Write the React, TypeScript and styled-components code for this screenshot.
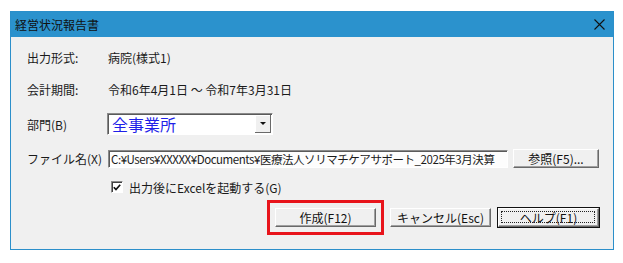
import styled, { createGlobalStyle } from 'styled-components';

const GlobalStyle = createGlobalStyle`
  html, body {
    margin: 0;
    padding: 0;
    background: #ffffff;
  }
  body {
    font-family: 'Noto Sans CJK JP', 'Liberation Sans', sans-serif;
    font-size: 12px;
    color: #1a1a1a;
  }
`;

const Page = styled.div`
  width: 623px;
  height: 263px;
  padding: 11px 0 0 10px;
  box-sizing: border-box;
`;

const Window = styled.div`
  width: 604px;
  height: 239px;
  border: 1px solid #2b8fca;
  box-sizing: border-box;
  background: #f0f0f0;
  display: flex;
  flex-direction: column;
`;

const TitleBar = styled.div`
  height: 25px;
  background: #2b92cd;
  display: flex;
  align-items: center;
  justify-content: space-between;
  padding: 0 8px 0 4px;
  flex-shrink: 0;
`;

const Title = styled.span`
  font-size: 12px;
  color: #111;
`;

const CloseIcon = styled.svg`
  width: 11px;
  height: 11px;
`;

const Body = styled.div`
  display: flex;
  flex-direction: column;
  padding: 10px 12px 0 16px;
`;

const Row = styled.div<{ $top: number; $h: number }>`
  display: flex;
  align-items: center;
  height: ${p => p.$h}px;
  margin-top: ${p => p.$top}px;
`;

const Label = styled.div`
  width: 81px;
  flex-shrink: 0;
  white-space: nowrap;
`;

const Value = styled.div`
  white-space: nowrap;
`;

const Combo = styled.div`
  width: 166px;
  height: 22px;
  box-sizing: border-box;
  border-top: 1px solid #8a8a8a;
  border-left: 1px solid #8a8a8a;
  border-right: 1px solid #ffffff;
  border-bottom: 1px solid #ffffff;
  box-shadow: inset 1px 1px 0 #5a5a5a;
  background: #ffffff;
  display: flex;
  align-items: stretch;
  margin-left: -1px;
`;

const ComboText = styled.div`
  flex: 1;
  font-size: 16px;
  line-height: 20px;
  color: #1f1fe8;
  padding-left: 4px;
`;

const DropButton = styled.div`
  width: 15px;
  margin: 1px;
  background: #f0f0f0;
  border-right: 1px solid #6a6a6a;
  border-bottom: 1px solid #6a6a6a;
  box-shadow: inset 1px 1px 0 #ffffff;
  display: flex;
  align-items: center;
  justify-content: center;
`;

const Arrow = styled.div`
  width: 0;
  height: 0;
  border-left: 3px solid transparent;
  border-right: 3px solid transparent;
  border-top: 3px solid #111;
`;

const TextField = styled.div`
  width: 400px;
  height: 18px;
  box-sizing: border-box;
  border-top: 1px solid #8a8a8a;
  border-left: 1px solid #8a8a8a;
  border-right: 1px solid #ffffff;
  border-bottom: 1px solid #ffffff;
  box-shadow: inset 1px 1px 0 #5a5a5a;
  background: #fdfdfd;
  overflow: hidden;
  white-space: nowrap;
  font-size: 11.5px;
  line-height: 16px;
  padding-left: 2px;
  letter-spacing: -0.45px;
`;

const Button = styled.button<{ $w: number; $default?: boolean }>`
  width: ${p => p.$w}px;
  height: 19px;
  padding: 0;
  box-sizing: border-box;
  font-family: 'Noto Sans CJK JP', 'Liberation Sans', sans-serif;
  font-size: 12px;
  line-height: 14px;
  color: #111;
  background: #f0f0f0;
  border: none;
  border-top: 1px solid #ffffff;
  border-left: 1px solid #ffffff;
  border-right: 1px solid #696969;
  border-bottom: 1px solid #696969;
  box-shadow: inset -1px -1px 0 #a0a0a0;
  outline: ${p => (p.$default ? '1px solid #111' : 'none')};
  position: relative;
  display: flex;
  align-items: center;
  justify-content: center;
`;

const BrowseButton = styled(Button)`
  margin-left: 5px;
`;

const FocusRect = styled.span`
  position: absolute;
  inset: 2px 3px 3px 2px;
  border: 1px dotted #222;
`;

const Highlight = styled.div`
  outline: 3px solid #e8141b;
  outline-offset: 5px;
  display: flex;
`;

const Check = styled.div`
  width: 12px;
  height: 12px;
  box-sizing: border-box;
  border-top: 1px solid #8a8a8a;
  border-left: 1px solid #8a8a8a;
  border-right: 1px solid #ffffff;
  border-bottom: 1px solid #ffffff;
  box-shadow: inset 1px 1px 0 #404040;
  background: #fff;
  display: flex;
  align-items: center;
  justify-content: center;
  margin-left: 84px;
  margin-right: 6px;
`;

const Buttons = styled.div`
  width: 100%;
  display: flex;
  justify-content: flex-end;
  gap: 14px;
  padding-right: 2px;
`;

const ButtonGroup = styled.div`
  display: flex;
  gap: 7px;
`;

export default function App() {
  return (
    <Page>
      <GlobalStyle />
      <Window>
        <TitleBar>
          <Title>経営状況報告書</Title>
          <CloseIcon viewBox="0 0 11 11">
            <path d="M0.5 0.5 L10.5 10.5 M10.5 0.5 L0.5 10.5" stroke="#111" strokeWidth="1.1" />
          </CloseIcon>
        </TitleBar>
        <Body>
          <Row $top={0} $h={20}>
            <Label>出力形式:</Label>
            <Value>病院(様式1)</Value>
          </Row>
          <Row $top={12} $h={20}>
            <Label>会計期間:</Label>
            <Value>令和6年4月1日 ～ 令和7年3月31日</Value>
          </Row>
          <Row $top={14} $h={22}>
            <Label>部門(B)</Label>
            <Combo>
              <ComboText>全事業所</ComboText>
              <DropButton>
                <Arrow />
              </DropButton>
            </Combo>
          </Row>
          <Row $top={14} $h={19}>
            <Label>ファイル名(X)</Label>
            <TextField>C:¥Users¥XXXXX¥Documents¥医療法人ソリマチケアサポート_2025年3月決算</TextField>
            <BrowseButton $w={86}>参照(F5)...</BrowseButton>
          </Row>
          <Row $top={12} $h={14}>
            <Check>
              <svg width="8" height="7" viewBox="0 0 8 7">
                <path d="M0.8 3.2 L3 5.6 L7.2 0.8" stroke="#111" strokeWidth="1.7" fill="none" />
              </svg>
            </Check>
            <Value>出力後にExcelを起動する(G)</Value>
          </Row>
          <Row $top={14} $h={19}>
            <Buttons>
              <Highlight>
                <Button $w={101}>作成(F12)</Button>
              </Highlight>
              <ButtonGroup>
                <Button $w={101}>キャンセル(Esc)</Button>
                <Button $w={101} $default>
                  <FocusRect />
                  ヘルプ(F1)
                </Button>
              </ButtonGroup>
            </Buttons>
          </Row>
        </Body>
      </Window>
    </Page>
  );
}
